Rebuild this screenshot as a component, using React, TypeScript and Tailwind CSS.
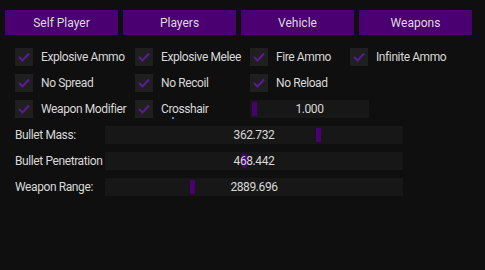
import React from 'react';

const tabs = ['Self Player', 'Players', 'Vehicle', 'Weapons'];

const Check = ({ label }: { label: string }) => (
    <div className="flex items-center gap-[8px]">
        <div className="w-[18px] h-[18px] shrink-0 bg-[#1f1f1f] flex items-center justify-center">
            <svg width="12" height="10" viewBox="0 0 12 10">
                <polyline points="1,5 4.5,8.5 11,1.5" fill="none" stroke="#5b1a96" strokeWidth="2" />
            </svg>
        </div>
        <span className="whitespace-nowrap">{label}</span>
    </div>
);

const Slider = ({ width, value, grab }: { width: number; value: string; grab: number }) => (
    <div className="relative h-[18px] shrink-0 bg-[#171717] flex items-center justify-center" style={{ width }}>
        <div className="absolute top-[2px] w-[5px] h-[14px] bg-[#4a0070]" style={{ left: grab }} />
        <span className="relative">{value}</span>
    </div>
);

const rows: [string, string, string?, string?][] = [
    ['Explosive Ammo', 'Explosive Melee', 'Fire Ammo', 'Infinite Ammo'],
    ['No Spread', 'No Recoil', 'No Reload'],
];

const sliders = [
    { label: 'Bullet Mass:', value: '362.732', grab: 211 },
    { label: 'Bullet Penetration', value: '468.442', grab: 137 },
    { label: 'Weapon Range:', value: '2889.696', grab: 85 },
];

export default function App() {
    return (
        <div className="w-[485px] h-[270px] bg-[#0f0f0f] text-[#d8d8d8] text-[12px] tracking-[-0.4px] font-['Roboto',sans-serif] overflow-hidden">
            <div className="flex gap-[5px] pl-[5px] pt-[10px]">
                {tabs.map((t) => (
                    <div key={t} className="w-[113px] h-[25px] bg-[#4a0070] flex items-center justify-center text-[#dcdcdc] tracking-normal">
                        {t}
                    </div>
                ))}
            </div>
            <div className="flex flex-col gap-[8px] pl-[15px] mt-[13px]">
                {rows.map((r, i) => (
                    <div key={i} className="flex h-[18px]">
                        <div className="w-[120px] shrink-0"><Check label={r[0]} /></div>
                        <div className="w-[115px] shrink-0"><Check label={r[1]} /></div>
                        {r[2] && <div className="w-[100px] shrink-0"><Check label={r[2]} /></div>}
                        {r[3] && <div><Check label={r[3]} /></div>}
                    </div>
                ))}
                <div className="flex h-[18px]">
                    <div className="w-[120px] shrink-0"><Check label="Weapon Modifier" /></div>
                    <div className="w-[115px] shrink-0 relative">
                        <Check label="Crosshair" />
                        <div className="absolute left-[37px] top-[17px] w-[2px] h-[2px] bg-[#3b8fe8]" />
                    </div>
                    <Slider width={119} value="1.000" grab={2} />
                </div>
                {sliders.map((s) => (
                    <div key={s.label} className="flex items-center h-[18px]">
                        <span className="w-[90px] shrink-0 whitespace-nowrap">{s.label}</span>
                        <Slider width={298} value={s.value} grab={s.grab} />
                    </div>
                ))}
            </div>
        </div>
    );
}
